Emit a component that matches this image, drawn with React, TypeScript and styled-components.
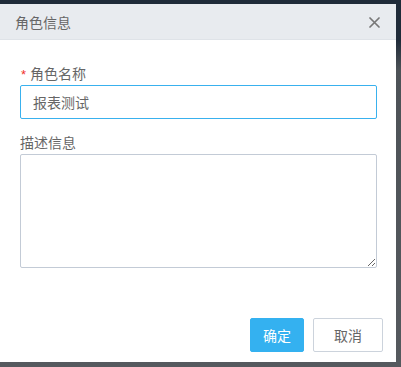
import React from "react";
import styled, { createGlobalStyle } from "styled-components";

const Global = createGlobalStyle`
  html, body { margin: 0; padding: 0; }
  body {
    width: 401px;
    height: 367px;
    overflow: hidden;
    background: linear-gradient(to bottom, #1f2b39 0px, #1f2b39 40px, #4d5257 70px, #55595e 100%);
    font-family: "Noto Sans CJK SC", "Noto Sans", sans-serif;
  }
`;

const Page = styled.div`
  padding-top: 4px;
`;

const Modal = styled.div`
  width: 396px;
  height: 358px;
  background: #fff;
  display: flex;
  flex-direction: column;
  box-sizing: border-box;
`;

const Header = styled.div`
  height: 36px;
  box-sizing: border-box;
  background: #e8ebef;
  border-bottom: 1px solid #dfe3e8;
  display: flex;
  align-items: center;
  justify-content: space-between;
  padding: 0 16px 0 15px;
`;

const Title = styled.div`
  font-size: 14px;
  color: #666;
  line-height: 20px;
`;

const Close = styled.button`
  border: none;
  background: none;
  padding: 0;
  width: 12px;
  height: 12px;
  display: flex;
  align-items: center;
  justify-content: center;
  margin-top: 2px;
  cursor: pointer;
`;

const Body = styled.div`
  padding: 23px 19px 0 20px;
  display: flex;
  flex-direction: column;
`;

const Label = styled.label`
  font-size: 14px;
  line-height: 20px;
  color: #666;
  display: flex;
  align-items: flex-start;
  margin-bottom: 2px;
`;

const Star = styled.span`
  color: #f0302a;
  font-size: 13px;
  line-height: 13px;
  margin-top: 5px;
  margin-right: 4px;
  margin-left: 1px;
  font-family: "Liberation Sans", sans-serif;
`;

const Input = styled.input`
  box-sizing: border-box;
  width: 100%;
  height: 34px;
  border: 1px solid #39b1ee;
  border-radius: 2px;
  padding: 0 12px;
  font-size: 14px;
  color: #666;
  font-family: inherit;
  outline: none;
  margin-bottom: 13px;
`;

const TextArea = styled.textarea`
  box-sizing: border-box;
  width: 100%;
  height: 114px;
  border: 1px solid #c3cbd6;
  border-radius: 2px;
  font-family: inherit;
  font-size: 14px;
  outline: none;
  display: block;
  margin: 0;
`;

const Footer = styled.div`
  margin-top: auto;
  padding: 0 13px 10px 0;
  display: flex;
  justify-content: flex-end;
  gap: 9px;
`;

const Button = styled.button<{ $primary?: boolean }>`
  box-sizing: border-box;
  height: 34px;
  width: ${(p) => (p.$primary ? "54px" : "70px")};
  border-radius: 2px;
  font-family: inherit;
  font-size: 14px;
  padding: 0;
  border: 1px solid ${(p) => (p.$primary ? "#34b1f0" : "#ccd3dc")};
  background: ${(p) => (p.$primary ? "#34b1f0" : "#fff")};
  color: ${(p) => (p.$primary ? "#fff" : "#666")};
  cursor: pointer;
`;

export default function App() {
  return (
    <Page>
      <Global />
      <Modal>
        <Header>
          <Title>角色信息</Title>
          <Close aria-label="close">
            <svg width="11" height="11" viewBox="0 0 11 11">
              <path d="M1 1 L10 10 M10 1 L1 10" stroke="#777" strokeWidth="1.7" strokeLinecap="round" />
            </svg>
          </Close>
        </Header>
        <Body>
          <Label>
            <Star>*</Star>角色名称
          </Label>
          <Input defaultValue="报表测试" />
          <Label>描述信息</Label>
          <TextArea />
        </Body>
        <Footer>
          <Button $primary>确定</Button>
          <Button>取消</Button>
        </Footer>
      </Modal>
    </Page>
  );
}
